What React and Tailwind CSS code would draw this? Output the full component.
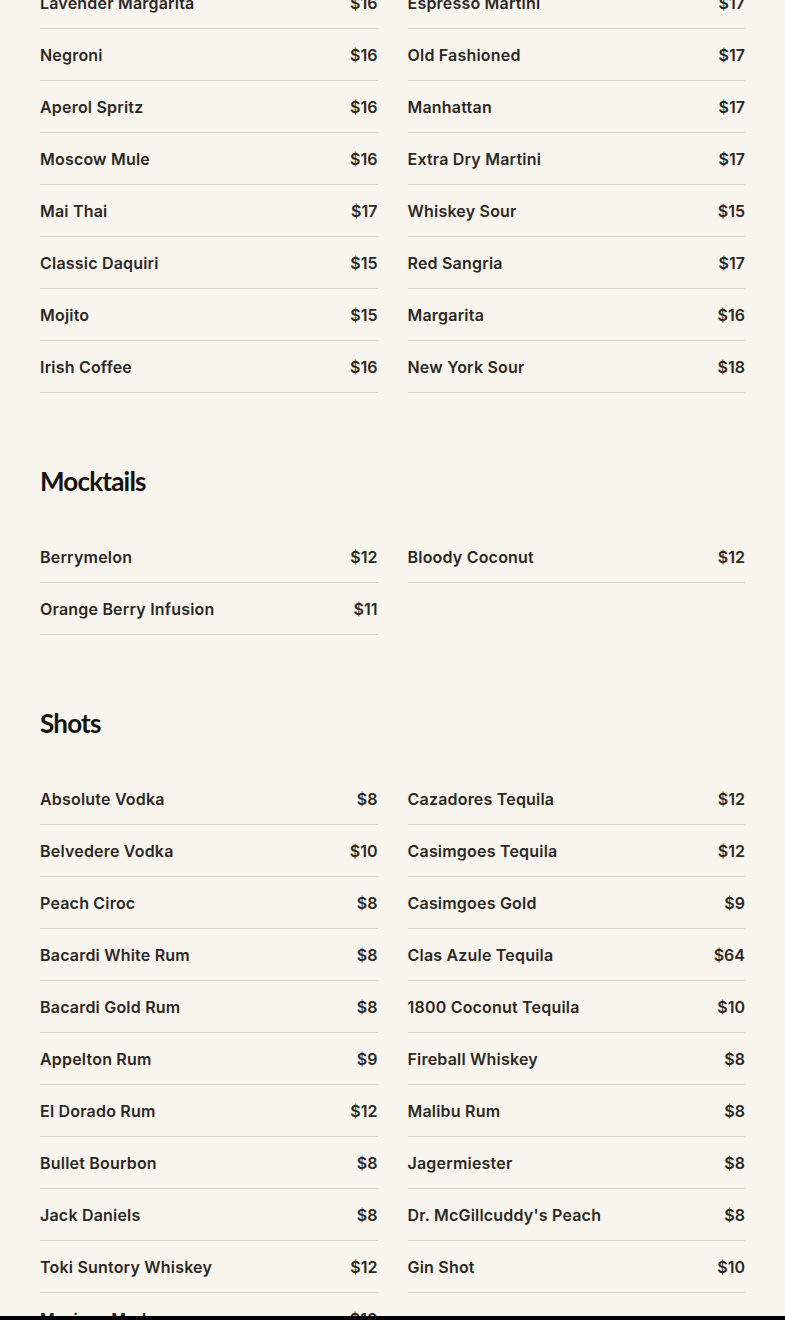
import React from "react";

const sections = [
  {
    title: null,
    items: [
      ["Lavender Margarita", "$16"],
      ["Espresso Martini", "$17"],
      ["Negroni", "$16"],
      ["Old Fashioned", "$17"],
      ["Aperol Spritz", "$16"],
      ["Manhattan", "$17"],
      ["Moscow Mule", "$16"],
      ["Extra Dry Martini", "$17"],
      ["Mai Thai", "$17"],
      ["Whiskey Sour", "$15"],
      ["Classic Daquiri", "$15"],
      ["Red Sangria", "$17"],
      ["Mojito", "$15"],
      ["Margarita", "$16"],
      ["Irish Coffee", "$16"],
      ["New York Sour", "$18"],
    ],
  },
  {
    title: "Mocktails",
    items: [
      ["Berrymelon", "$12"],
      ["Bloody Coconut", "$12"],
      ["Orange Berry Infusion", "$11"],
    ],
  },
  {
    title: "Shots",
    items: [
      ["Absolute Vodka", "$8"],
      ["Cazadores Tequila", "$12"],
      ["Belvedere Vodka", "$10"],
      ["Casimgoes Tequila", "$12"],
      ["Peach Ciroc", "$8"],
      ["Casimgoes Gold", "$9"],
      ["Bacardi White Rum", "$8"],
      ["Clas Azule Tequila", "$64"],
      ["Bacardi Gold Rum", "$8"],
      ["1800 Coconut Tequila", "$10"],
      ["Appelton Rum", "$9"],
      ["Fireball Whiskey", "$8"],
      ["El Dorado Rum", "$12"],
      ["Malibu Rum", "$8"],
      ["Bullet Bourbon", "$8"],
      ["Jagermiester", "$8"],
      ["Jack Daniels", "$8"],
      ["Dr. McGillcuddy's Peach", "$8"],
      ["Toki Suntory Whiskey", "$12"],
      ["Gin Shot", "$10"],
      ["Mexican Mud", "$10"],
    ],
  },
];

function MenuRow({ name, price }) {
  return (
    <div className="flex h-[52px] items-center justify-between border-b border-[#d6d1c9]">
      <span className="tracking-[0.2px]">{name}</span>
      <span>{price}</span>
    </div>
  );
}

export default function App() {
  return (
    <div className="min-h-screen bg-[#f8f5ef] font-['Inter',sans-serif] text-[#2b2825]">
      <main className="-mt-[23px] px-10 pb-10">
        {sections.map((section, i) => (
          <section key={i}>
            {section.title && (
              <h2 className="mt-[72px] mb-[34px] h-8 font-['Lato',sans-serif] text-[26px] leading-8 font-bold tracking-[-0.8px] text-[#141210]">
                {section.title}
              </h2>
            )}
            <div className="grid grid-cols-2 gap-x-[30px] text-[16px] font-semibold">
              {section.items.map(([name, price]) => (
                <MenuRow key={name} name={name} price={price} />
              ))}
            </div>
          </section>
        ))}
      </main>

      {/* bottom bar peeking in */}
      <div className="fixed bottom-0 left-0 right-0 h-1 bg-black" />
    </div>
  );
}
